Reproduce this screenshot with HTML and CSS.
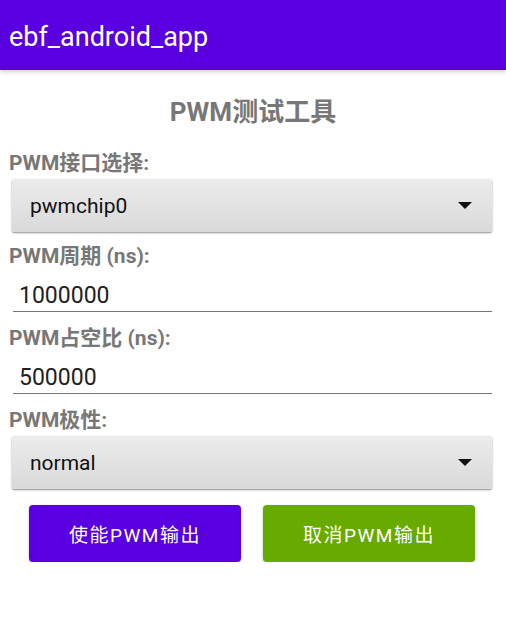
FILE: index.html
```html
<!DOCTYPE html>
<html>
<head>
<meta charset="utf-8">
<link rel="stylesheet" href="styles.css">
</head>
<body>
<header class="appbar">ebf_android_app</header>
<main class="content">
  <h1 class="title">PWM测试工具</h1>
  <div class="label">PWM接口选择:</div>
  <div class="spinner">
    <span class="spinner-text">pwmchip0</span>
    <svg class="arrow" width="14" height="7" viewBox="0 0 14 7"><path d="M0 0H14L7 7Z" fill="#111"/></svg>
  </div>
  <div class="label gap">PWM周期 (ns):</div>
  <div class="field"><span>1000000</span></div>
  <div class="label gap2">PWM占空比 (ns):</div>
  <div class="field"><span>500000</span></div>
  <div class="label gap2">PWM极性:</div>
  <div class="spinner">
    <span class="spinner-text">normal</span>
    <svg class="arrow" width="14" height="7" viewBox="0 0 14 7"><path d="M0 0H14L7 7Z" fill="#111"/></svg>
  </div>
  <div class="buttons">
    <button class="btn enable">使能PWM输出</button>
    <button class="btn disable">取消PWM输出</button>
  </div>
</main>
</body>
</html>
```
FILE: styles.css
```css
html, body {
  margin: 0;
  padding: 0;
  background: #fff;
  font-family: Roboto, "Noto Sans CJK SC", sans-serif;
}
.appbar {
  height: 70px;
  box-sizing: border-box;
  background: #5a00e0;
  color: #fff;
  font-size: 27px;
  display: flex;
  align-items: center;
  padding: 3px 0 0 9px;
  box-shadow: 0 2px 4px rgba(0,0,0,0.18);
  position: relative;
}
.content {
  display: flex;
  flex-direction: column;
  padding: 0 14px 0 9px;
}
.title {
  margin: 27px 0 0;
  text-align: center;
  font-size: 26px;
  line-height: 30px;
  font-weight: bold;
  color: #777;
  padding-left: 5px;
}
.label {
  margin-top: 24px;
  font-size: 21px;
  line-height: 24px;
  font-weight: bold;
  color: #777;
}
.label.gap { margin-top: 12px; }
.label.gap2 { margin-top: 14px; }
.spinner {
  margin: 4px 0 0 3px;
  height: 53px;
  box-sizing: border-box;
  background: linear-gradient(#ececec, #d9d9d9);
  border-radius: 2px;
  box-shadow: 0 1px 2px rgba(0,0,0,0.45);
  display: flex;
  align-items: center;
  justify-content: space-between;
  padding: 0 20px 0 18px;
}
.spinner-text {
  font-size: 21px;
  color: #111;
}
.arrow { display: block; }
.field {
  margin: 9px 0 0 4px;
  height: 32px;
  border-bottom: 1px solid #777;
  display: flex;
  align-items: center;
  padding-left: 6px;
  padding-top: 2px;
  box-sizing: content-box;
  font-size: 23px;
  color: #222;
}
.buttons {
  display: flex;
  justify-content: space-between;
  margin: 16px 17px 0 20px;
}
.btn {
  width: 212px;
  height: 57px;
  border: none;
  border-radius: 4px;
  color: #fff;
  font-family: Roboto, "Noto Sans CJK SC", sans-serif;
  font-size: 19px;
  letter-spacing: 1.5px;
  box-shadow: 0 1px 3px rgba(0,0,0,0.25);
}
.enable { background: #5a00e0; }
.disable { background: #67aa00; }
```
